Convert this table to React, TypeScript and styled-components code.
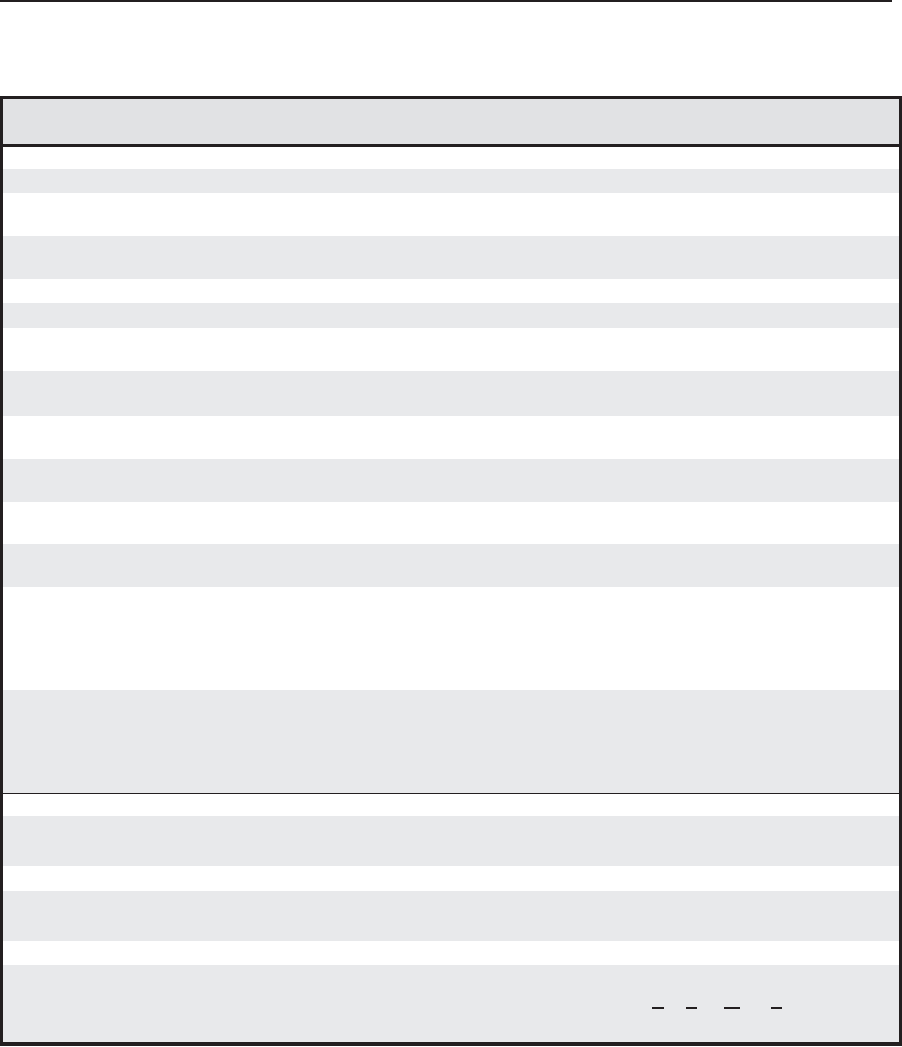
import styled, { createGlobalStyle } from "styled-components";

const GlobalStyle = createGlobalStyle`
  html, body {
    margin: 0;
    padding: 0;
    background: #fff;
    font-family: "Liberation Sans", Arial, sans-serif;
  }
`;

type RowSpec = { h: number; shade?: boolean; divider?: boolean; dashes?: boolean };

const rows: RowSpec[] = [
  { h: 22 },
  { h: 24, shade: true },
  { h: 43 },
  { h: 43, shade: true },
  { h: 24 },
  { h: 25, shade: true },
  { h: 43 },
  { h: 45, shade: true },
  { h: 43 },
  { h: 43, shade: true },
  { h: 42 },
  { h: 43, shade: true },
  { h: 103 },
  { h: 103, shade: true },
  { h: 23, divider: true },
  { h: 50, shade: true },
  { h: 25 },
  { h: 50, shade: true },
  { h: 24 },
  { h: 77, shade: true, dashes: true },
];

// widths and left offsets of the short overbars in the last row
const dashes = [
  { w: 12, gap: 0 },
  { w: 11, gap: 22 },
  { w: 16, gap: 27 },
  { w: 11, gap: 31 },
];

const App = () => {
  return (
    <Page>
      <GlobalStyle />
      <TopRule />
      <Table>
        <Header />
        {rows.map((r, i) => (
          <Row key={i} $h={r.h} $shade={r.shade} $divider={r.divider}>
            {r.dashes && (
              <DashGroup>
                {dashes.map((d, j) => (
                  <Dash key={j} $w={d.w} $gap={d.gap} />
                ))}
              </DashGroup>
            )}
          </Row>
        ))}
      </Table>
    </Page>
  );
};

const Page = styled.div`
  width: 902px;
  display: flex;
  flex-direction: column;
`;

const TopRule = styled.div`
  width: 892px;
  height: 2px;
  background: #231f20;
  margin-bottom: 94px;
`;

const Table = styled.div`
  width: 896px;
  border: 3px solid #231f20;
  border-bottom-width: 4px;
  display: flex;
  flex-direction: column;
`;

const Header = styled.div`
  height: 45px;
  background: #e1e2e4;
  border-bottom: 3px solid #231f20;
`;

const Row = styled.div<{ $h: number; $shade?: boolean; $divider?: boolean }>`
  height: ${({ $h }) => $h}px;
  box-sizing: border-box;
  background: ${({ $shade }) => ($shade ? "#e8e9eb" : "#ffffff")};
  border-top: ${({ $divider }) => ($divider ? "1px solid #231f20" : "none")};
  display: flex;
  align-items: flex-start;
`;

const DashGroup = styled.div`
  display: flex;
  margin-left: 649px;
  margin-top: 42px;
`;

const Dash = styled.span<{ $w: number; $gap: number }>`
  display: block;
  width: ${({ $w }) => $w}px;
  height: 2px;
  margin-left: ${({ $gap }) => $gap}px;
  background: #231f20;
`;

export default App;
